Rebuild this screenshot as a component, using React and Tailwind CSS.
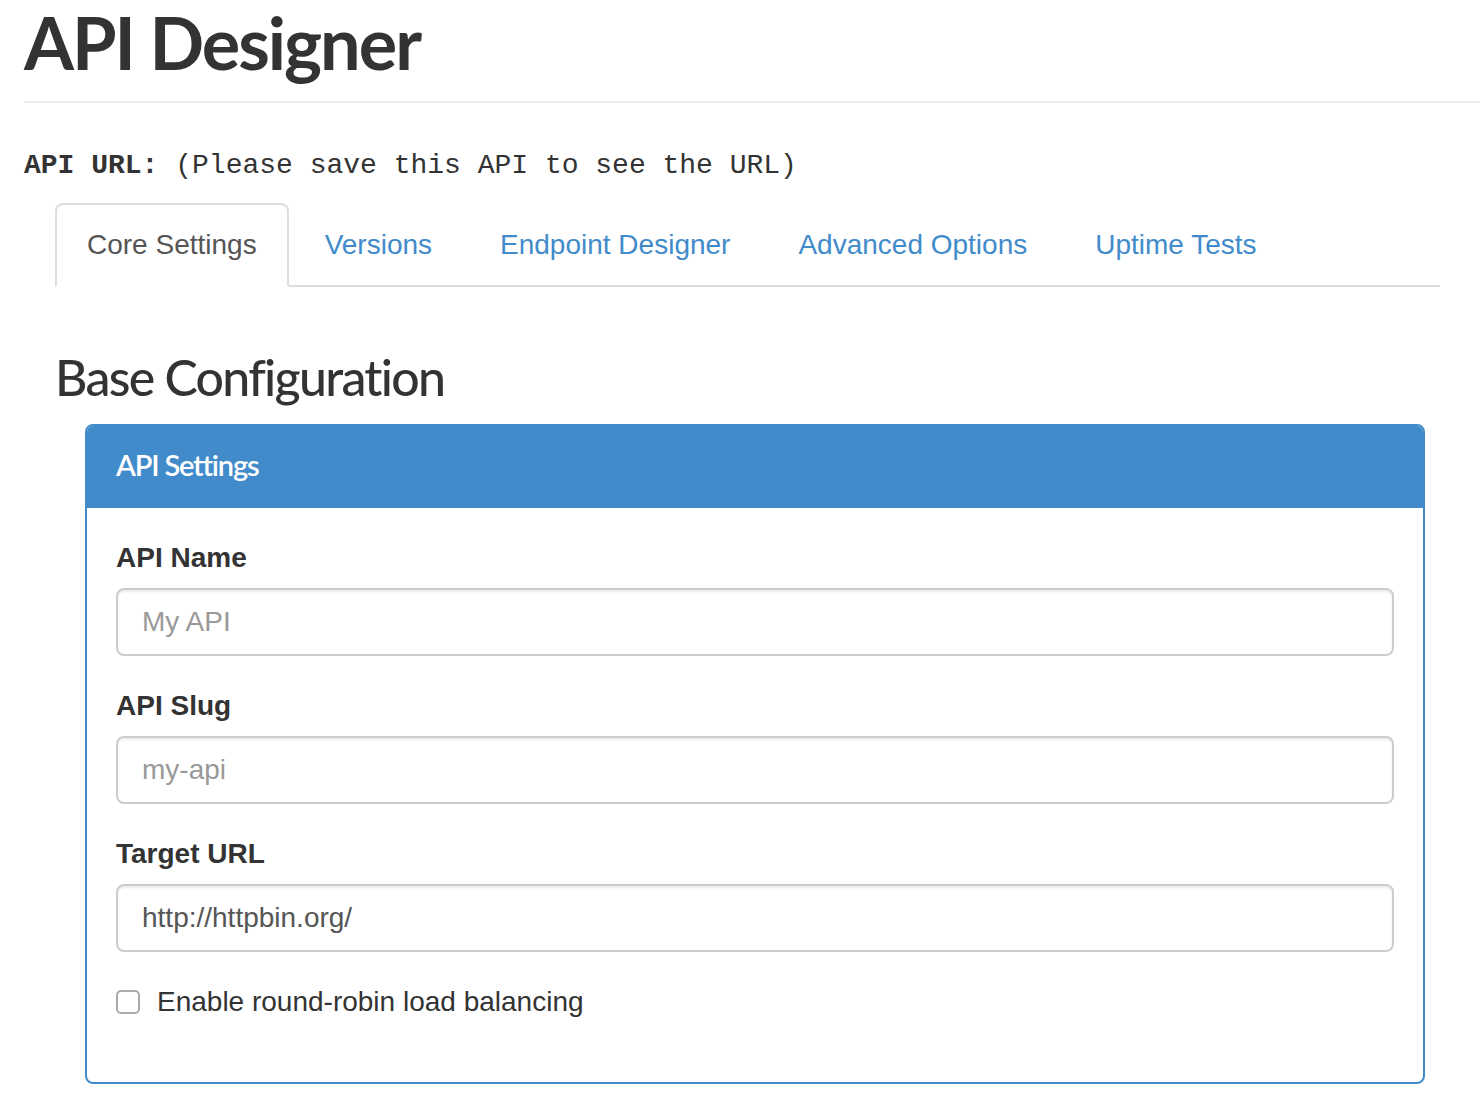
import React, { useState } from 'react';

const tabs = ['Core Settings', 'Versions', 'Endpoint Designer', 'Advanced Options', 'Uptime Tests'];

const Field = ({ label, placeholder, value }) => (
  <div className="mb-[30px]">
    <label className="block font-bold text-[28px] leading-[40px] text-[#333] mb-[10px]">{label}</label>
    <input
      type="text"
      placeholder={placeholder}
      defaultValue={value}
      className="block w-full h-[68px] px-[24px] text-[28px] text-[#555] placeholder:text-[#999] bg-white border-2 border-[#ccc] rounded-[8px] shadow-[inset_0_2px_2px_rgba(0,0,0,0.075)] outline-none"
    />
  </div>
);

const App = () => {
  const [active, setActive] = useState(0);

  return (
    <div className="min-h-[1112px] bg-white text-[#333] font-['Liberation_Sans',Arial,sans-serif] pl-[24px] overflow-hidden">
      {/* Page header */}
      <div className="mt-[2px] pb-[19px] border-b-2 border-[#eee]">
        <h1 className="font-['Lato',sans-serif] font-bold text-[72px] leading-[80px] text-[#333] tracking-[-2px]">API Designer</h1>
      </div>

      <p className="mt-[43px] font-['Liberation_Mono','Courier_New',monospace] text-[28px] leading-[40px] text-[#333]">
        <b>API URL:</b> (Please save this API to see the URL)
      </p>

      {/* Tabs */}
      <div className="ml-[31px] w-[1385px] mt-[17px]">
        <ul className="flex border-b-2 border-[#ddd]">
          {tabs.map((t, i) => (
            <li key={t} className="-mb-[2px] mr-[4px]">
              <button
                onClick={() => setActive(i)}
                className={
                  i === active
                    ? 'block px-[30px] py-[20px] text-[28px] leading-[40px] text-[#555] bg-white border-2 border-[#ddd] border-b-transparent rounded-t-[8px]'
                    : 'block px-[30px] py-[20px] text-[28px] leading-[40px] text-[#428bca] border-2 border-transparent rounded-t-[8px]'
                }
              >
                {t}
              </button>
            </li>
          ))}
        </ul>

        {/* Tab content */}
        <h2 className="mt-[60px] font-['Lato',sans-serif] font-medium text-[50px] leading-[60px] text-[#333] tracking-[-1.7px]">
          Base Configuration
        </h2>

        <div className="mt-[17px] ml-[30px] w-[1340px] border-2 border-[#428bca] rounded-[8px] overflow-hidden">
          <div className="bg-[#428bca] px-[29px] pt-[19px] pb-[23px]">
            <h3 className="font-['Lato',sans-serif] font-semibold text-[29px] leading-[40px] text-white tracking-[-1.2px]">API Settings</h3>
          </div>
          <div className="px-[29px] pt-[30px] pb-[60px]">
            <Field label="API Name" placeholder="My API" />
            <Field label="API Slug" placeholder="my-api" />
            <Field label="Target URL" value="http://httpbin.org/" />
            <label className="flex items-center h-[40px] text-[28px] text-[#333]">
              <input type="checkbox" className="appearance-none w-[24px] h-[24px] border-2 border-[#aaa] rounded-[5px] bg-white mr-[17px]" />
              Enable round-robin load balancing
            </label>
          </div>
        </div>
      </div>
    </div>
  );
};

export default App;
